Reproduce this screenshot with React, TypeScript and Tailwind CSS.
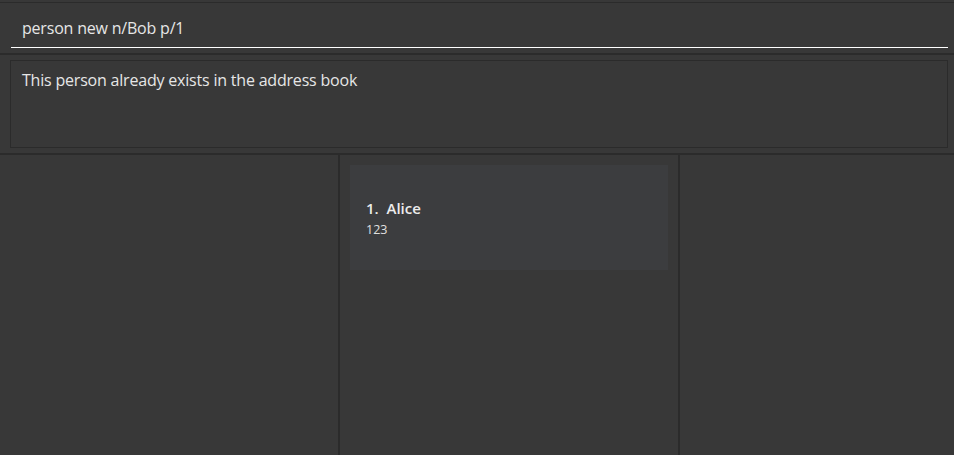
import React from "react";

const font = { fontFamily: '"Open Sans", "Noto Sans", sans-serif' };

const persons = [{ name: "Alice", phone: "123" }];

export default function App() {
  return (
    <div
      className="w-[954px] h-[455px] bg-[#383838] flex flex-col overflow-hidden text-[#e6e6e6]"
      style={font}
    >
      {/* command box */}
      <div className="mt-[2px] border-t border-[#2b2b2b] h-[51px] flex flex-col px-[11px] pr-[6px]">
        <div className="h-[45px] flex items-center border-b border-white px-[11px] pt-[5px] text-[16px] tracking-[-0.2px]">
          person new n/Bob p/1
        </div>
      </div>
      <div className="h-[2px] bg-[#2b2b2b]" />

      {/* result display */}
      <div className="h-[98px] px-[10px] pr-[6px] pt-[5px]">
        <div className="h-[88px] border border-[#2b2b2b] px-[11px] pt-[7px] text-[16px] tracking-[-0.2px]">
          This person already exists in the address book
        </div>
      </div>
      <div className="h-[2px] bg-[#2b2b2b]" />

      {/* panels */}
      <div className="flex-1 flex">
        <div className="w-[338px]" />
        <div className="w-[2px] bg-[#2b2b2b]" />
        <div className="w-[338px] p-[10px] flex flex-col">
          {persons.map((p, i) => (
            <div key={i} className="h-[105px] bg-[#3c3d3f] px-[16px] pt-[33px]">
              <div className="text-[15px] font-semibold text-[#ececec] leading-[20px]">
                {i + 1}.&nbsp;&nbsp;{p.name}
              </div>
              <div className="text-[12.5px] text-[#e0e0e0] leading-[16px] mt-[4px]">
                {p.phone}
              </div>
            </div>
          ))}
        </div>
        <div className="w-[2px] bg-[#2b2b2b]" />
        <div className="flex-1" />
      </div>
    </div>
  );
}
